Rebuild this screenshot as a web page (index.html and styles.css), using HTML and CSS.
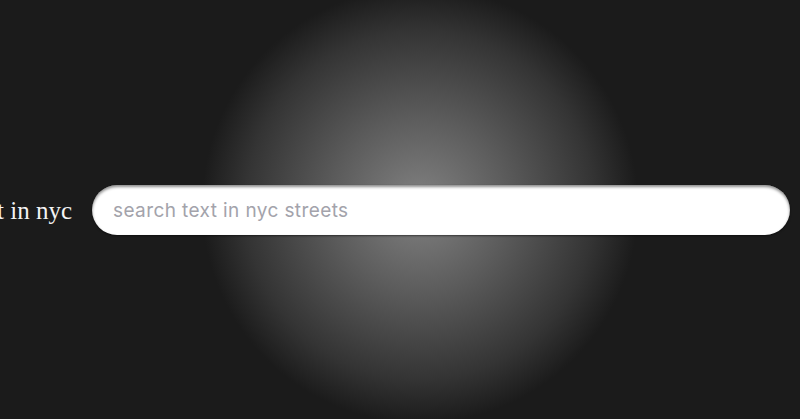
FILE: index.html
```html
<!DOCTYPE html>
<html>
<head>
<meta charset="utf-8">
<link rel="stylesheet" href="styles.css">
</head>
<body>
<main class="row">
  <h1 class="title">search text in nyc</h1>
  <input class="search" type="text" placeholder="search text in nyc streets">
</main>
</body>
</html>
```
FILE: styles.css
```css
html, body {
  margin: 0;
  height: 100%;
  background: #1b1b1b;
  overflow: hidden;
}
body {
  background: radial-gradient(circle 218px at 420px 205px, #828282 0%, #5c5c5c 40%, #343434 80%, #1b1b1b 100%), #1b1b1b;
}
.row {
  height: 100%;
  display: flex;
  align-items: center;
  justify-content: flex-end;
  padding-right: 10px;
  gap: 20px;
}
.title {
  flex-shrink: 0;
  margin: 0;
  font-family: "Liberation Serif", serif;
  font-weight: normal;
  font-size: 25px;
  color: #f4f4f4;
  white-space: nowrap;
  position: relative;
  top: 1px;
}
.search {
  flex-shrink: 0;
  width: 698px;
  height: 50px;
  box-sizing: border-box;
  border: none;
  border-radius: 25px;
  background: #fff;
  padding: 2px 21px 0;
  font-family: Inter, sans-serif;
  font-weight: 400;
  font-size: 19px;
  letter-spacing: 0.4px;
  color: #333;
  outline: none;
  box-shadow: inset 0 2px 3px rgba(0,0,0,0.45), 0 1px 2px rgba(0,0,0,0.5);
}
.search::placeholder { color: #a3a3ab; }
```
